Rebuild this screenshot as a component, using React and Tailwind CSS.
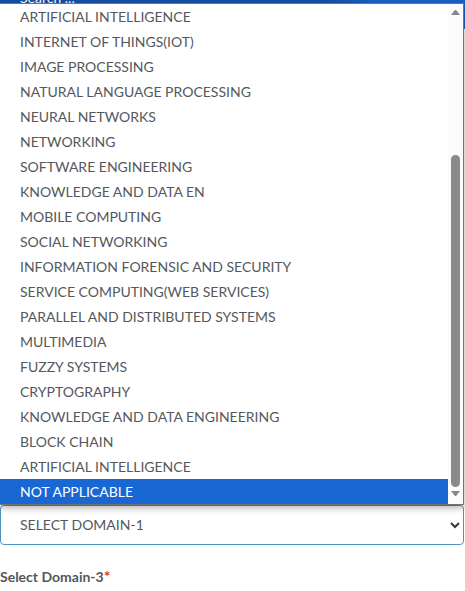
import React, { useState } from "react";

const domains = [
  "ARTIFICIAL INTELLIGENCE",
  "INTERNET OF THINGS(IOT)",
  "IMAGE PROCESSING",
  "NATURAL LANGUAGE PROCESSING",
  "NEURAL NETWORKS",
  "NETWORKING",
  "SOFTWARE ENGINEERING",
  "KNOWLEDGE AND DATA EN",
  "MOBILE COMPUTING",
  "SOCIAL NETWORKING",
  "INFORMATION FORENSIC AND SECURITY",
  "SERVICE COMPUTING(WEB SERVICES)",
  "PARALLEL AND DISTRIBUTED SYSTEMS",
  "MULTIMEDIA",
  "FUZZY SYSTEMS",
  "CRYPTOGRAPHY",
  "KNOWLEDGE AND DATA ENGINEERING",
  "BLOCK CHAIN",
  "ARTIFICIAL INTELLIGENCE",
  "NOT APPLICABLE",
];

function Scrollbar() {
  return (
    <div className="flex w-[15px] flex-col items-center bg-[#fbfbfb] pt-1.5 pb-2" aria-hidden="true">
      <svg className="h-[5px] w-[9px]" viewBox="0 0 9 5" fill="#858585">
        <path d="M0 5 4 0h1l4 5z" />
      </svg>
      <div className="mt-[140px] mb-1 w-[9px] flex-1 rounded-full bg-[#8a8a8a]" />
      <svg className="h-[5px] w-[9px]" viewBox="0 0 9 5" fill="#858585">
        <path d="M0 0h9L5 5H4z" />
      </svg>
    </div>
  );
}

function DomainMenu({ active, onPick }) {
  return (
    <div className="absolute right-0 bottom-full left-0 z-10 flex border-t border-r border-b border-[#727578] bg-white shadow-[0_3px_7px_rgba(0,0,0,0.3)]">
      <ul role="listbox" aria-label="Domains" className="flex-1">
        {domains.map((name, i) => (
          <li
            key={i}
            role="option"
            aria-selected={i === active}
            onClick={() => onPick(i)}
            className={
              i === active
                ? "h-[25px] bg-[#1967d2] pl-5 leading-[25px] text-white"
                : "h-[25px] pl-5 leading-[25px]"
            }
          >
            {name}
          </li>
        ))}
      </ul>
      <Scrollbar />
    </div>
  );
}

export default function App() {
  const [active, setActive] = useState(domains.length - 1);

  return (
    <div className="min-h-screen bg-white font-['Lato',sans-serif] text-sm text-[#54585c]">
      <header className="h-[29px] overflow-hidden bg-linear-to-r from-[#1650a4] from-70% to-[#1a60c6] to-80%">
        <input
          type="search"
          aria-label="Search"
          placeholder="Search ..."
          className="-mt-3 block h-5 w-full bg-transparent px-5 leading-5 outline-none placeholder:text-white"
        />
      </header>
      <main className="pt-[476px]">
        <div className="relative mr-px">
          <DomainMenu active={active} onPick={setActive} />
          <select
            aria-label="Domain"
            className="block h-10 w-full appearance-none rounded border border-[#4a93bf] bg-white pr-8 pl-[19px] text-[#54585c] outline-none"
          >
            <option>SELECT DOMAIN-1</option>
          </select>
          <svg
            className="pointer-events-none absolute top-[17px] right-1 h-[7px] w-[10px]"
            viewBox="0 0 10 7"
            fill="none"
            stroke="#34383c"
            strokeWidth="2"
            aria-hidden="true"
          >
            <path d="M1 1l4 4 4-4" />
          </svg>
        </div>
        <p className="mt-5 text-sm leading-6 font-bold">
          Select Domain-3<span className="text-base leading-none text-[#e5303c]">*</span>
        </p>
      </main>
    </div>
  );
}
